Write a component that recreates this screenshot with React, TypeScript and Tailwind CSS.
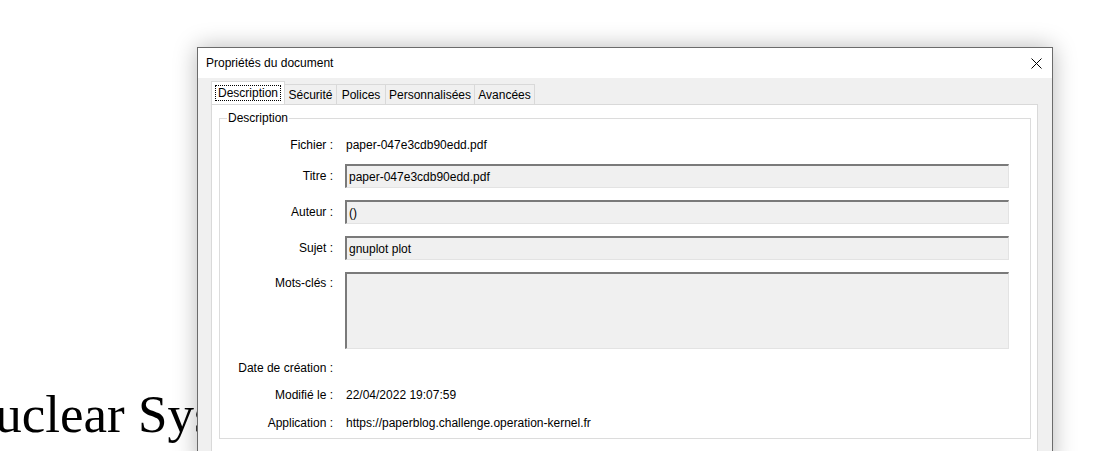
const ui = "font-['Liberation_Sans',Arial,sans-serif] text-[12px] leading-[16px] text-black";

const Field = ({ value, tall }: { value: string; tall?: boolean }) => (
  <div
    className={`flex-1 mr-[21px] bg-[#f0f0f0] border-t-2 border-l-2 border-b border-r border-t-[#7a7a7a] border-l-[#7a7a7a] border-b-[#e3e3e3] border-r-[#e3e3e3] pl-[2px] ${
      tall ? "h-[77px]" : "h-[24px] flex items-center"
    }`}
  >
    {value}
  </div>
);

const Row = ({
  label,
  children,
  className = "",
  top,
}: {
  label: string;
  children: React.ReactNode;
  className?: string;
  top?: boolean;
}) => (
  <div className={`flex ${top ? "items-start" : "items-center"} ${className}`}>
    <div className={`w-[114px] text-right pr-[1px] shrink-0 ${top ? "pt-[3px]" : ""}`}>{label}</div>
    <div className="ml-[11px] flex-1 flex">{children}</div>
  </div>
);

export default function App() {
  return (
    <div className="relative w-[1095px] h-[451px] overflow-hidden bg-white">
      {/* page behind the dialog */}
      <div className="pt-[388px]">
        <p className="ml-[-43px] font-['Liberation_Serif',serif] text-[53px] leading-none text-black whitespace-nowrap">
          Nuclear Systems
        </p>
      </div>

      {/* dialog */}
      <div
        className={`absolute left-[197px] top-[47px] w-[856px] h-[420px] border border-[#6b6b6b] bg-[#f0f0f0] shadow-[0_0_22px_rgba(0,0,0,0.28)] ${ui}`}
      >
        <div className="h-[30px] bg-white flex items-center justify-between pl-[8px] pr-[9px]">
          <span>Propriétés du document</span>
          <svg width="11" height="11" viewBox="0 0 11 11" className="mr-[1px] mt-[1px]">
            <path d="M0.5 0.5 L10.5 10.5 M10.5 0.5 L0.5 10.5" stroke="#000" strokeWidth="1" fill="none" />
          </svg>
        </div>

        <div className="pl-[13px] pr-[14px] pt-[4px]">
          {/* tabs */}
          <div className="flex items-end h-[22px]">
            <div className="relative z-10 w-[74px] h-[23px] bg-white border border-b-0 border-[#d9d9d9] flex items-center justify-center">
              <span className="outline outline-1 outline-dotted outline-black px-[2px] leading-[14px]">Description</span>
            </div>
            <div className="w-[53px] h-[20px] -ml-px border border-b-0 border-[#d9d9d9] flex items-center justify-center">Sécurité</div>
            <div className="w-[50px] h-[20px] -ml-px border border-b-0 border-[#d9d9d9] flex items-center justify-center">Polices</div>
            <div className="w-[90px] h-[20px] -ml-px border border-b-0 border-[#d9d9d9] flex items-center justify-center">Personnalisées</div>
            <div className="w-[61px] h-[20px] -ml-px border border-b-0 border-[#d9d9d9] flex items-center justify-center">Avancées</div>
          </div>

          {/* panel */}
          <div className="bg-white border border-[#d9d9d9] pt-[13px] pl-[7px] pr-[6px] h-[360px]">
            <div className="relative border border-[#dcdcdc] pt-[18px] pb-[7px]">
              <span className="absolute left-[7px] top-[-9px] bg-white px-[1px]">Description</span>

              <Row label="Fichier :" className="h-[16px]">
                <span className="pl-[1px]">paper-047e3cdb90edd.pdf</span>
              </Row>
              <Row label="Titre :" className="mt-[11px]">
                <Field value="paper-047e3cdb90edd.pdf" />
              </Row>
              <Row label="Auteur :" className="mt-[12px]">
                <Field value="()" />
              </Row>
              <Row label="Sujet :" className="mt-[12px]">
                <Field value="gnuplot plot" />
              </Row>
              <Row label="Mots-clés :" className="mt-[12px]" top>
                <Field value="" tall />
              </Row>
              <Row label="Date de création :" className="mt-[11px] h-[16px]">
                <span />
              </Row>
              <Row label="Modifié le :" className="mt-[11px] h-[16px]">
                <span className="pl-[1px]">22/04/2022 19:07:59</span>
              </Row>
              <Row label="Application :" className="mt-[12px] h-[16px]">
                <span className="pl-[1px]">https://paperblog.challenge.operation-kernel.fr</span>
              </Row>
            </div>
          </div>
        </div>
      </div>
    </div>
  );
}
